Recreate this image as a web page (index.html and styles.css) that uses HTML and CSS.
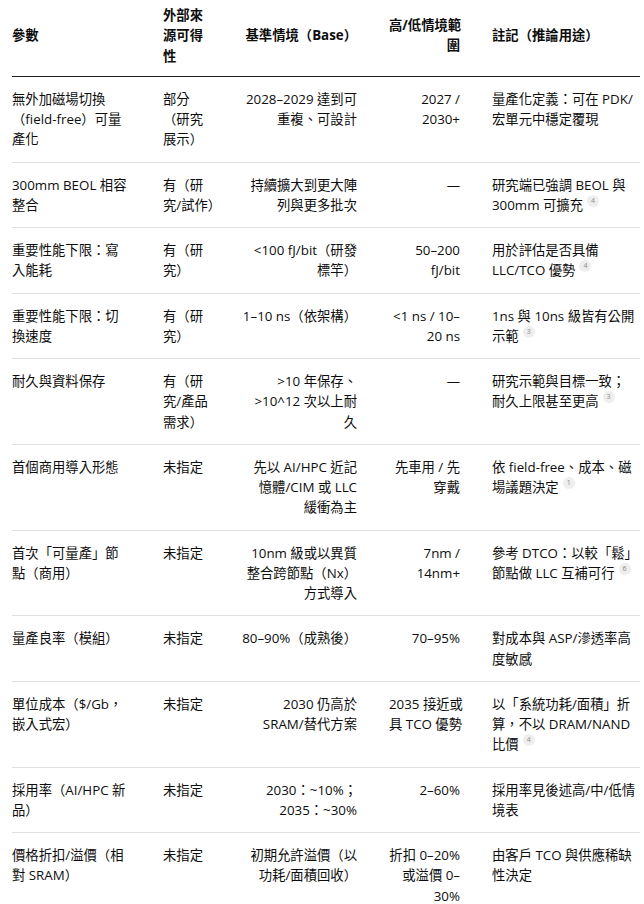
FILE: index.html
```html
<!DOCTYPE html>
<html lang="zh-Hant">
<head>
<meta charset="utf-8">
<title>MRAM 參數表</title>
<link rel="stylesheet" href="styles.css">
</head>
<body>
<div class="page">
<table class="params">
  <colgroup>
    <col class="c1"><col class="c2"><col class="c3"><col class="c4"><col class="c5">
  </colgroup>
  <thead>
    <tr>
      <th class="l">參數</th>
      <th class="l">外部來<br>源可得<br>性</th>
      <th class="r">基準情境（Base）</th>
      <th class="r">高/低情境範<br>圍</th>
      <th class="l">註記（推論用途）</th>
    </tr>
  </thead>
  <tbody>
    <tr>
      <td class="l">無外加磁場切換<br>（field-free）可量<br>產化</td>
      <td class="l">部分<br>（研究<br>展示）</td>
      <td class="r">2028–2029 達到可<br>重複、可設計</td>
      <td class="r">2027 /<br>2030+</td>
      <td class="l">量產化定義：可在 PDK/<br>宏單元中穩定覆現</td>
    </tr>
    <tr>
      <td class="l">300mm BEOL 相容<br>整合</td>
      <td class="l">有（研<br>究/試作）</td>
      <td class="r">持續擴大到更大陣<br>列與更多批次</td>
      <td class="r">—</td>
      <td class="l">研究端已強調 BEOL 與<br>300mm 可擴充<span class="cite">4</span></td>
    </tr>
    <tr>
      <td class="l">重要性能下限：寫<br>入能耗</td>
      <td class="l">有（研<br>究）</td>
      <td class="r">&lt;100 fJ/bit（研發<br>標竿）</td>
      <td class="r">50–200<br>fJ/bit</td>
      <td class="l">用於評估是否具備<br>LLC/TCO 優勢<span class="cite">4</span></td>
    </tr>
    <tr>
      <td class="l">重要性能下限：切<br>換速度</td>
      <td class="l">有（研<br>究）</td>
      <td class="r">1–10 ns（依架構）</td>
      <td class="r">&lt;1 ns / 10–<br>20 ns</td>
      <td class="l">1ns 與 10ns 級皆有公開<br>示範<span class="cite">3</span></td>
    </tr>
    <tr>
      <td class="l">耐久與資料保存</td>
      <td class="l">有（研<br>究/產品<br>需求）</td>
      <td class="r">&gt;10 年保存、<br>&gt;10^12 次以上耐<br>久</td>
      <td class="r">—</td>
      <td class="l">研究示範與目標一致；<br>耐久上限甚至更高<span class="cite">3</span></td>
    </tr>
    <tr>
      <td class="l">首個商用導入形態</td>
      <td class="l">未指定</td>
      <td class="r">先以 AI/HPC 近記<br>憶體/CIM 或 LLC<br>緩衝為主</td>
      <td class="r">先車用 / 先<br>穿戴</td>
      <td class="l">依 field-free、成本、磁<br>場議題決定<span class="cite">1</span></td>
    </tr>
    <tr>
      <td class="l">首次「可量產」節<br>點（商用）</td>
      <td class="l">未指定</td>
      <td class="r">10nm 級或以異質<br>整合跨節點（Nx）<br>方式導入</td>
      <td class="r">7nm /<br>14nm+</td>
      <td class="l">參考 DTCO：以較「鬆」<br>節點做 LLC 互補可行<span class="cite">6</span></td>
    </tr>
    <tr>
      <td class="l">量產良率（模組）</td>
      <td class="l">未指定</td>
      <td class="r">80–90%（成熟後）</td>
      <td class="r">70–95%</td>
      <td class="l">對成本與 ASP/滲透率高<br>度敏感</td>
    </tr>
    <tr>
      <td class="l">單位成本（$/Gb，<br>嵌入式宏）</td>
      <td class="l">未指定</td>
      <td class="r">2030 仍高於<br>SRAM/替代方案</td>
      <td class="r">2035 接近或<br>具 TCO 優勢</td>
      <td class="l">以「系統功耗/面積」折<br>算，不以 DRAM/NAND<br>比價<span class="cite">4</span></td>
    </tr>
    <tr>
      <td class="l">採用率（AI/HPC 新<br>品）</td>
      <td class="l">未指定</td>
      <td class="r">2030：~10%；<br>2035：~30%</td>
      <td class="r">2–60%</td>
      <td class="l">採用率見後述高/中/低情<br>境表</td>
    </tr>
    <tr>
      <td class="l">價格折扣/溢價（相<br>對 SRAM）</td>
      <td class="l">未指定</td>
      <td class="r">初期允許溢價（以<br>功耗/面積回收）</td>
      <td class="r">折扣 0–20%<br>或溢價 0–<br>30%</td>
      <td class="l">由客戶 TCO 與供應稀缺<br>性決定</td>
    </tr>
  </tbody>
</table>
</div>
</body>
</html>
```

FILE: styles.css
```css
html, body {
  margin: 0;
  padding: 0;
  background: #ffffff;
}

body {
  font-family: "Open Sans", "Noto Sans CJK TC", sans-serif;
  font-size: 13.33px;
  line-height: 20.25px;
  color: #0d0d0d;
}

.page {
  padding: 0 4px 0 12px;
}

.params {
  width: 628px;
  border-collapse: collapse;
  table-layout: fixed;
}

.c1 { width: 135px; }
.c2 { width: 79px; }
.c3 { width: 147px; }
.c4 { width: 103px; }
.c5 { width: 164px; }

.params th,
.params td {
  white-space: nowrap;
  padding: 12px 16px;
}

.params th {
  font-weight: 700;
  vertical-align: middle;
  padding-top: 5px;
  padding-bottom: 10px;
  border-bottom: 1px solid #1f1f1f;
}

.params td {
  vertical-align: top;
  border-bottom: 1px solid #e0e0e0;
}

.params tbody tr:last-child td {
  border-bottom: none;
}

.params th:first-child,
.params td:first-child {
  padding-left: 0;
}

.params th:last-child,
.params td:last-child {
  padding-right: 0;
}

.l { text-align: left; }
.r { text-align: right; }

.cite {
  display: inline-block;
  width: 12px;
  height: 12px;
  margin-left: 4px;
  border-radius: 50%;
  background: #eeeeee;
  color: #8c8c8c;
  font-size: 7px;
  line-height: 12px;
  text-align: center;
  vertical-align: top;
}
```
